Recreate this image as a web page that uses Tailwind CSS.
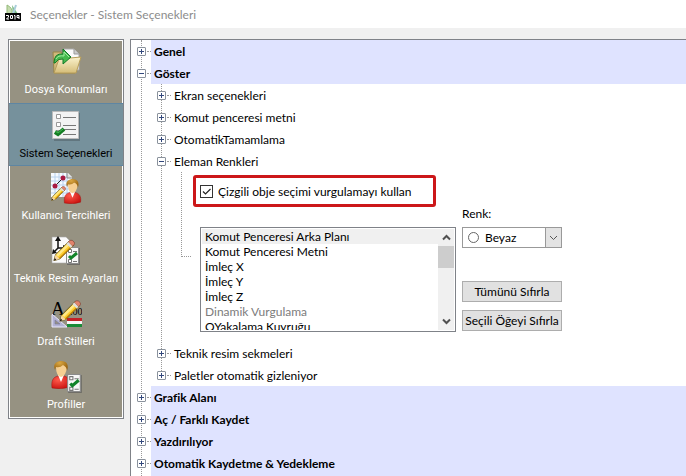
<!DOCTYPE html>
<html lang="tr">
  <head>
    <meta charset="UTF-8" />
    <meta name="viewport" content="width=device-width, initial-scale=1.0" />
    <title>Seçenekler - Sistem Seçenekleri</title>
    <script src="https://cdn.jsdelivr.net/npm/@tailwindcss/browser@4"></script>
  </head>
  <body
    class="bg-[#f0f0f0] text-black h-screen overflow-hidden flex flex-col text-[12px] leading-[15px] font-['Lato','Noto_Sans',sans-serif]"
  >
    <svg class="absolute size-0">
      <defs>
        <linearGradient id="folder" x1="0" y1="0" x2="0" y2="1">
          <stop offset="0" stop-color="#faf2cd" />
          <stop offset="1" stop-color="#d5bd78" />
        </linearGradient>
        <radialGradient id="hair" cx=".4" cy=".2" r=".8">
          <stop offset="0" stop-color="#dba843" />
          <stop offset="1" stop-color="#8f5908" />
        </radialGradient>
        <radialGradient id="shirt" cx=".35" cy=".3" r=".8">
          <stop offset="0" stop-color="#ff5a4c" />
          <stop offset="1" stop-color="#c60d0b" />
        </radialGradient>
        <symbol id="person" viewBox="0 0 20 28">
          <path d="M1 27c-1-7 1-11 6-12h6c5 1 7 5 6 11q-9 3-18 1z" fill="url(#shirt)" stroke="#9c1512" stroke-width=".5" />
          <path d="m7 14 3 7 3-7z" fill="#fff" />
          <path d="M5 6q0 9 5 10 5-1 6-10l-5-3z" fill="#f6cf92" />
          <path d="M4 9C1 2 7 0 10 0c6 0 8 4 6 10q0-4-4-6-3 3-7 2z" fill="url(#hair)" />
        </symbol>
        <symbol id="pencil" viewBox="0 0 26 26">
          <path d="m1 25 2-7L19 2l5 5L8 23z" fill="#ffcf2e" stroke="#51400b" stroke-width="1" />
          <path d="m4 18 15-15 2 2L6 20z" fill="#ffe98b" />
          <path d="m7 22 15-15 1 1L8 23z" fill="#c18409" />
          <path d="m18 3 2-2q3-1 5 2 1 2 0 3l-2 2z" fill="#e2836c" stroke="#753b2c" stroke-width=".7" />
          <path d="m16 5 2-2 5 5-2 2z" fill="#dedede" />
          <path d="m1 25 2-7 5 5z" fill="#f5d6a3" />
          <path d="m1 25 1-3 2 2z" fill="#111" />
        </symbol>
        <symbol id="checklist" viewBox="0 0 14 18">
          <path d="M1 1h13v17H1z" fill="#555" opacity=".6" />
          <path d="M.5.5h12v16H.5z" fill="#f7f7f7" stroke="#8b8b8b" />
          <path d="M2.500 2.500h3v3h-3zM2.500 12.500h3v3h-3z" fill="#fff" stroke="#777" />
          <path d="M7 4.500h4M7 14.500h4" stroke="#777" />
          <path d="m3 9 2 2 6-5" fill="none" stroke="#118329" stroke-width="3" />
        </symbol>
      </defs>
    </svg>

    <header class="bg-white h-7 shrink-0 flex items-center pl-1 gap-1.5">
      <svg class="size-5" viewBox="0 0 20 20">
        <path d="M3 1v10l5-2Q9 4 3 1z" fill="#c5dcae" stroke="#94b979" />
        <path d="m8 1 6 9H9z" fill="#78ba83" />
        <path d="m12 1-3 9" stroke="#a9cdda" stroke-width="2" />
        <path d="M1 9h16v8H1z" fill="#050505" />
        <path
          d="M2 11.500h2.500v1.500l-2 2H5M6.500 11.500h2v3h-2zM10 11.500h1v4M15 15v-3.500h-2v2h2"
          fill="none" stroke="#fff"
        />
      </svg>
      <h1 class="text-[12px] text-[#8c8c8c]">Seçenekler - Sistem Seçenekleri</h1>
    </header>

    <div class="flex-1 min-h-0 flex pt-[11px] pl-2 gap-1.5">
      <!-- category bar -->
      <nav class="w-[116px] shrink-0 self-start border border-[#7f8288] bg-[#969282] text-white text-[11px] leading-[14px] font-['Roboto','Noto_Sans',sans-serif] text-center shadow-[inset_0_0_0_1px_#fff]">
        <a href="#" class="h-[63px] pt-1.5 flex flex-col items-center gap-[5px] whitespace-nowrap">
          <svg class="size-8 shrink-0" viewBox="0 0 32 32">
            <path d="M3 6h8l2 3h12v18H4z" fill="#cfb97b" stroke="#988449" />
            <path d="M14 3h10l5 5v16H14z" fill="#fafafa" stroke="#aaa" />
            <path d="M24 3v5h5" fill="#ccc" stroke="#999" />
            <path d="m9 13 22-2-5 16H4z" fill="url(#folder)" stroke="#b69d5a" />
            <path d="M4 17Q4 7 13 8V3l8 8-8 7v-5q-5-1-8 4z" fill="#45b94d" stroke="#137b28" />
            <path d="M6 13q2-4 8-3V6l5 5" fill="none" stroke="#a1eba0" />
          </svg>
          <span>Dosya Konumları</span>
        </a>
        <a href="#" aria-current="page" class="h-[63px] pt-1.5 flex flex-col items-center gap-[5px] whitespace-nowrap bg-[#76919c] text-black border-y border-[#5e86a3]">
          <svg class="size-8 shrink-0" viewBox="0 0 32 32">
            <path d="M4 3h26v28H4z" fill="#53646c" opacity=".6" />
            <path d="M2.500 1.500h26v27h-26z" fill="#f3f3f3" stroke="#bbb" />
            <path d="M6.500 4.500h4v4h-4zM6.500 12.500h4v4h-4zM6.500 20.500h4v4h-4z" fill="#fff" stroke="#999" />
            <path d="M13 7.500h13M13 15.500h13M13 19.500h13M13 24.500h13" stroke="#777" />
            <path d="m5 22 3 2 6-5" fill="none" stroke="#137d23" stroke-width="4" />
            <path d="m5 21 3 2 5-4" fill="none" stroke="#44b950" />
          </svg>
          <span>Sistem Seçenekleri</span>
        </a>
        <a href="#" class="h-[63px] pt-1.5 flex flex-col items-center gap-[5px] whitespace-nowrap">
          <svg class="size-8 shrink-0" viewBox="0 0 32 32">
            <path d="M1 1h17l4 4v20H1z" fill="#f5faff" />
            <path d="M5 1v24M9 1v24M13 1v24M17 1v24M1 5h20M1 9h20M1 13h20M1 17h20M1 21h20" stroke="#b8d2ee" />
            <path d="M17 1v5h5" fill="#ddd" stroke="#888" />
            <path d="m5 14 8-8" stroke="#222" />
            <circle cx="5" cy="14" r="2.500" fill="#a91942" />
            <circle cx="13" cy="6" r="2.500" fill="#a91942" />
            <use href="#person" x="13" y="7" width="19" height="25" />
            <use href="#pencil" x="1" y="14" width="15" height="15" />
          </svg>
          <span>Kullanıcı Tercihleri</span>
        </a>
        <a href="#" class="h-[63px] pt-1.5 flex flex-col items-center gap-[5px] whitespace-nowrap">
          <svg class="size-8 shrink-0" viewBox="0 0 32 32">
            <path d="M2 2h14l4 4v22H2z" fill="#fafafa" stroke="#aaa" stroke-width=".6" />
            <path d="M8 4v9h10M8 13l-4 4" fill="none" stroke="#111" stroke-width="1.500" />
            <path d="m8 1 3 5H5zM2 19l1-5 4 4zM13 10l5 3-5 3z" fill="#111" />
            <use href="#checklist" x="16" y="12" width="14" height="18" />
            <use href="#pencil" x="3" y="4" width="22" height="23" />
          </svg>
          <span>Teknik Resim Ayarları</span>
        </a>
        <a href="#" class="h-[63px] pt-1.5 flex flex-col items-center gap-[5px] whitespace-nowrap">
          <svg class="size-8 shrink-0" viewBox="0 0 32 32">
            <text x="1" y="17" font-size="19" font-family="Liberation Serif, serif">A</text>
            <text x="20" y="17" font-size="10" font-family="Liberation Serif, serif">.00</text>
            <path d="m2 16 15 13H2z" fill="#b3b2d3" stroke="#e9e8fc" />
            <path d="m5 22 5 4H5z" fill="#969282" stroke="#7775a3" stroke-width=".6" />
            <path d="M17 20h15v3H17z" fill="#c22127" />
            <path d="M17 23h15v3H17z" fill="#f7f7f7" />
            <path d="M17 26h15v3H17z" fill="#188b37" />
            <use href="#pencil" x="9" y="1" width="22" height="24" />
          </svg>
          <span>Draft Stilleri</span>
        </a>
        <a href="#" class="h-[63px] pt-1.5 flex flex-col items-center gap-[5px] whitespace-nowrap">
          <svg class="size-8 shrink-0" viewBox="0 0 32 32">
            <use href="#person" x="0" y="0" width="22" height="28" />
            <use href="#checklist" x="17" y="13" width="15" height="19" />
          </svg>
          <span>Profiller</span>
        </a>
      </nav>

      <!-- option tree -->
      <main class="flex-1 min-w-0 bg-white border-t border-l border-[#7f8288] overflow-hidden relative">
        <div class="absolute left-[10px] inset-y-0 border-l border-dotted border-[#999]"></div>

        <div class="flex h-[22px]">
          <div class="relative w-5 shrink-0 flex items-center pl-1.5">
            <div class="absolute left-4 right-0 top-[11px] border-t border-dotted border-[#999]"></div>
            <button aria-label="Genel" class="relative size-[9px] bg-white border border-[#8a929c] rounded-[1px]">
              <svg class="size-[7px]" viewBox="0 0 7 7"><path d="M1 3.500h5M3.500 1v5" stroke="#33487c" /></svg>
            </button>
          </div>
          <div class="flex-1 bg-[#dfe3ff] pl-[3px] flex items-center font-bold">Genel</div>
        </div>
        <div class="flex h-[22px]">
          <div class="relative w-5 shrink-0 flex items-center pl-1.5">
            <div class="absolute left-4 right-0 top-[11px] border-t border-dotted border-[#999]"></div>
            <button aria-label="Göster" class="relative size-[9px] bg-white border border-[#8a929c] rounded-[1px]">
              <svg class="size-[7px]" viewBox="0 0 7 7"><path d="M1 3.500h5" stroke="#33487c" /></svg>
            </button>
          </div>
          <div class="flex-1 bg-[#dfe3ff] pl-[3px] flex items-center font-bold">Göster</div>
        </div>

        <div class="relative pl-5">
          <div class="absolute left-[30px] top-0 bottom-[11px] border-l border-dotted border-[#999]"></div>
          <div class="flex h-[22px]">
            <div class="relative w-5 shrink-0 flex items-center pl-1.5">
              <div class="absolute left-4 right-0 top-[11px] border-t border-dotted border-[#999]"></div>
              <button aria-label="Ekran seçenekleri" class="relative size-[9px] bg-white border border-[#8a929c] rounded-[1px]">
                <svg class="size-[7px]" viewBox="0 0 7 7"><path d="M1 3.500h5M3.500 1v5" stroke="#33487c" /></svg>
              </button>
            </div>
            <div class="pl-[3px] flex items-center">Ekran seçenekleri</div>
          </div>
          <div class="flex h-[22px]">
            <div class="relative w-5 shrink-0 flex items-center pl-1.5">
              <div class="absolute left-4 right-0 top-[11px] border-t border-dotted border-[#999]"></div>
              <button aria-label="Komut penceresi metni" class="relative size-[9px] bg-white border border-[#8a929c] rounded-[1px]">
                <svg class="size-[7px]" viewBox="0 0 7 7"><path d="M1 3.500h5M3.500 1v5" stroke="#33487c" /></svg>
              </button>
            </div>
            <div class="pl-[3px] flex items-center">Komut penceresi metni</div>
          </div>
          <div class="flex h-[22px]">
            <div class="relative w-5 shrink-0 flex items-center pl-1.5">
              <div class="absolute left-4 right-0 top-[11px] border-t border-dotted border-[#999]"></div>
              <button aria-label="OtomatikTamamlama" class="relative size-[9px] bg-white border border-[#8a929c] rounded-[1px]">
                <svg class="size-[7px]" viewBox="0 0 7 7"><path d="M1 3.500h5M3.500 1v5" stroke="#33487c" /></svg>
              </button>
            </div>
            <div class="pl-[3px] flex items-center">OtomatikTamamlama</div>
          </div>
          <div class="flex h-[22px]">
            <div class="relative w-5 shrink-0 flex items-center pl-1.5">
              <div class="absolute left-4 right-0 top-[11px] border-t border-dotted border-[#999]"></div>
              <button aria-label="Eleman Renkleri" class="relative size-[9px] bg-white border border-[#8a929c] rounded-[1px]">
                <svg class="size-[7px]" viewBox="0 0 7 7"><path d="M1 3.500h5" stroke="#33487c" /></svg>
              </button>
            </div>
            <div class="pl-[3px] flex items-center">Eleman Renkleri</div>
          </div>

          <!-- element colors -->
          <div class="relative h-[170px] pl-[42px] pt-[3px]">
            <div class="absolute left-[30px] top-0 h-[85px] w-[10px] border-l border-b border-dotted border-[#999]"></div>
            <div class="w-[243px] h-8 border-3 border-[#cc1719] rounded-[3px] flex items-center pl-1">
              <label class="flex items-center gap-[5px] whitespace-nowrap">
                <span class="relative size-[13px]">
                  <input type="checkbox" checked class="peer block appearance-none size-[13px] border border-[#333] bg-white" />
                  <svg class="hidden peer-checked:block absolute inset-0 size-[13px] pointer-events-none" viewBox="0 0 13 13">
                    <path d="m3 6.500 2.500 2.500 5-5" fill="none" stroke="#222" stroke-width="1.200" />
                  </svg>
                </span>
                Çizgili obje seçimi vurgulamayı kullan
              </label>
            </div>
            <div class="flex gap-1.5 pl-[7px]">
              <div class="mt-5 w-64 h-[105px] p-px border border-[#7f8288] flex">
                <ul role="listbox" aria-label="Eleman Renkleri" class="flex-1 overflow-hidden">
                  <li role="option" aria-selected="true" class="pl-[3px] bg-[#f0f0f0]">Komut Penceresi Arka Planı</li>
                  <li role="option" class="pl-[3px]">Komut Penceresi Metni</li>
                  <li role="option" class="pl-[3px]">İmleç X</li>
                  <li role="option" class="pl-[3px]">İmleç Y</li>
                  <li role="option" class="pl-[3px]">İmleç Z</li>
                  <li role="option" aria-disabled="true" class="pl-[3px] text-[#7c7c7c]">Dinamik Vurgulama</li>
                  <li role="option" class="pl-[3px]">OYakalama Kuyruğu</li>
                </ul>
                <div class="w-4 bg-[#f0f0f0] flex flex-col">
                  <button aria-label="Yukarı" class="h-[17px] flex items-center justify-center">
                    <svg class="w-[9px] h-[7px]" viewBox="0 0 9 7"><path d="m1 5.500 3.500-3.500L8 5.500" fill="none" stroke="#505050" stroke-width="2" /></svg>
                  </button>
                  <div class="h-[22px] bg-[#cdcdcd]"></div>
                  <button aria-label="Aşağı" class="h-[17px] mt-auto flex items-center justify-center">
                    <svg class="w-[9px] h-[7px]" viewBox="0 0 9 7"><path d="m1 1.500 3.500 3.500L8 1.500" fill="none" stroke="#505050" stroke-width="2" /></svg>
                  </button>
                </div>
              </div>
              <div class="w-[100px] flex flex-col">
                <label for="color" class="leading-[14px]">Renk:</label>
                <div class="relative mt-1.5 h-[21px]">
                  <select id="color" class="appearance-none w-full h-full border border-[#999] bg-white pl-[22px] leading-[15px]">
                    <option>Beyaz</option>
                  </select>
                  <span class="absolute left-1.5 top-[5px] size-[11px] rounded-full border border-[#666] pointer-events-none"></span>
                  <span class="absolute right-0 inset-y-0 w-[17px] border border-[#999] bg-[#e3e3e3] flex items-center justify-center pointer-events-none">
                    <svg class="w-[9px] h-[6px]" viewBox="0 0 9 6"><path d="m1 1 3.500 3.500L8 1" fill="none" stroke="#555" /></svg>
                  </span>
                </div>
                <button class="mt-[33px] h-[21px] border border-[#adadad] bg-[#e1e1e1] whitespace-nowrap flex items-center justify-center">Tümünü Sıfırla</button>
                <button class="mt-2 h-[21px] border border-[#adadad] bg-[#e1e1e1] whitespace-nowrap flex items-center justify-center">Seçili Öğeyi Sıfırla</button>
              </div>
            </div>
          </div>

          <div class="flex h-[22px]">
            <div class="relative w-5 shrink-0 flex items-center pl-1.5">
              <div class="absolute left-4 right-0 top-[11px] border-t border-dotted border-[#999]"></div>
              <button aria-label="Teknik resim sekmeleri" class="relative size-[9px] bg-white border border-[#8a929c] rounded-[1px]">
                <svg class="size-[7px]" viewBox="0 0 7 7"><path d="M1 3.500h5M3.500 1v5" stroke="#33487c" /></svg>
              </button>
            </div>
            <div class="pl-[3px] flex items-center">Teknik resim sekmeleri</div>
          </div>
          <div class="flex h-[22px]">
            <div class="relative w-5 shrink-0 flex items-center pl-1.5">
              <div class="absolute left-4 right-0 top-[11px] border-t border-dotted border-[#999]"></div>
              <button aria-label="Paletler otomatik gizleniyor" class="relative size-[9px] bg-white border border-[#8a929c] rounded-[1px]">
                <svg class="size-[7px]" viewBox="0 0 7 7"><path d="M1 3.500h5M3.500 1v5" stroke="#33487c" /></svg>
              </button>
            </div>
            <div class="pl-[3px] flex items-center">Paletler otomatik gizleniyor</div>
          </div>
        </div>

        <div class="flex h-[22px]">
          <div class="relative w-5 shrink-0 flex items-center pl-1.5">
            <div class="absolute left-4 right-0 top-[11px] border-t border-dotted border-[#999]"></div>
            <button aria-label="Grafik Alanı" class="relative size-[9px] bg-white border border-[#8a929c] rounded-[1px]">
              <svg class="size-[7px]" viewBox="0 0 7 7"><path d="M1 3.500h5M3.500 1v5" stroke="#33487c" /></svg>
            </button>
          </div>
          <div class="flex-1 bg-[#dfe3ff] pl-[3px] flex items-center font-bold">Grafik Alanı</div>
        </div>
        <div class="flex h-[22px]">
          <div class="relative w-5 shrink-0 flex items-center pl-1.5">
            <div class="absolute left-4 right-0 top-[11px] border-t border-dotted border-[#999]"></div>
            <button aria-label="Aç / Farklı Kaydet" class="relative size-[9px] bg-white border border-[#8a929c] rounded-[1px]">
              <svg class="size-[7px]" viewBox="0 0 7 7"><path d="M1 3.500h5M3.500 1v5" stroke="#33487c" /></svg>
            </button>
          </div>
          <div class="flex-1 bg-[#dfe3ff] pl-[3px] flex items-center font-bold">Aç / Farklı Kaydet</div>
        </div>
        <div class="flex h-[22px]">
          <div class="relative w-5 shrink-0 flex items-center pl-1.5">
            <div class="absolute left-4 right-0 top-[11px] border-t border-dotted border-[#999]"></div>
            <button aria-label="Yazdırılıyor" class="relative size-[9px] bg-white border border-[#8a929c] rounded-[1px]">
              <svg class="size-[7px]" viewBox="0 0 7 7"><path d="M1 3.500h5M3.500 1v5" stroke="#33487c" /></svg>
            </button>
          </div>
          <div class="flex-1 bg-[#dfe3ff] pl-[3px] flex items-center font-bold">Yazdırılıyor</div>
        </div>
        <div class="flex h-[22px]">
          <div class="relative w-5 shrink-0 flex items-center pl-1.5">
            <div class="absolute left-4 right-0 top-[11px] border-t border-dotted border-[#999]"></div>
            <button aria-label="Otomatik Kaydetme &amp; Yedekleme" class="relative size-[9px] bg-white border border-[#8a929c] rounded-[1px]">
              <svg class="size-[7px]" viewBox="0 0 7 7"><path d="M1 3.500h5M3.500 1v5" stroke="#33487c" /></svg>
            </button>
          </div>
          <div class="flex-1 bg-[#dfe3ff] pl-[3px] flex items-center font-bold">Otomatik Kaydetme &amp; Yedekleme</div>
        </div>
        <div class="ml-5 h-[22px] bg-[#dfe3ff]"></div>
      </main>
    </div>
  </body>
</html>
